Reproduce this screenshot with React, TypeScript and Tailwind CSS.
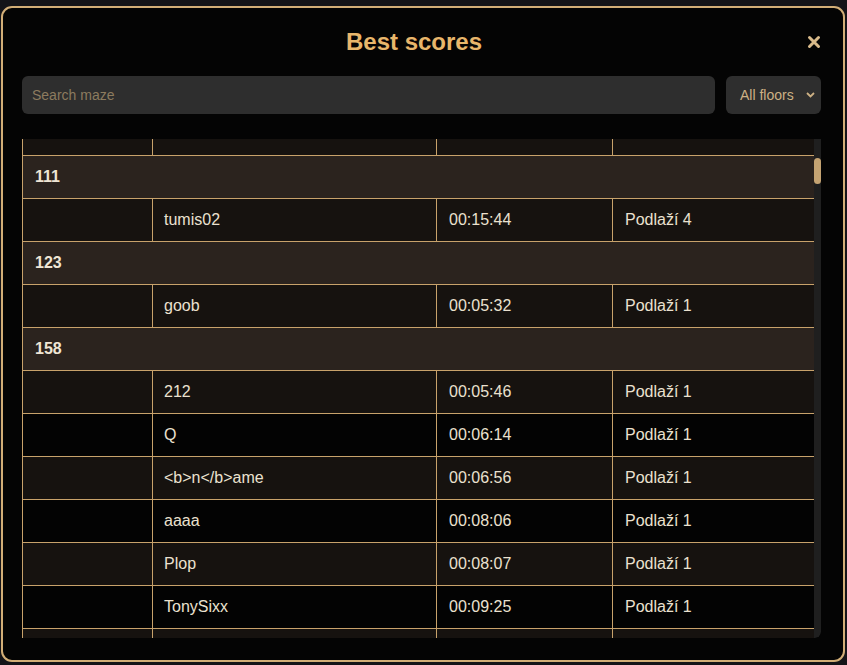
import { useState } from "react";

type Row =
  | { kind: "group"; label: string }
  | { kind: "score"; name: string; time: string; floor: string; shade: "brown" | "black" };

const rows: Row[] = [
  { kind: "score", name: "", time: "", floor: "", shade: "brown" },
  { kind: "group", label: "111" },
  { kind: "score", name: "tumis02", time: "00:15:44", floor: "Podlaží 4", shade: "brown" },
  { kind: "group", label: "123" },
  { kind: "score", name: "goob", time: "00:05:32", floor: "Podlaží 1", shade: "brown" },
  { kind: "group", label: "158" },
  { kind: "score", name: "212", time: "00:05:46", floor: "Podlaží 1", shade: "brown" },
  { kind: "score", name: "Q", time: "00:06:14", floor: "Podlaží 1", shade: "black" },
  { kind: "score", name: "<b>n</b>ame", time: "00:06:56", floor: "Podlaží 1", shade: "brown" },
  { kind: "score", name: "aaaa", time: "00:08:06", floor: "Podlaží 1", shade: "black" },
  { kind: "score", name: "Plop", time: "00:08:07", floor: "Podlaží 1", shade: "brown" },
  { kind: "score", name: "TonySixx", time: "00:09:25", floor: "Podlaží 1", shade: "black" },
  { kind: "score", name: "", time: "", floor: "", shade: "brown" },
];

function CloseIcon() {
  return (
    <svg width="14" height="14" viewBox="0 0 14 14" className="text-[#d9bb8b]">
      <path d="M2.5 2.5 L11.5 11.5 M11.5 2.5 L2.5 11.5" stroke="currentColor" strokeWidth="3" strokeLinecap="round" />
    </svg>
  );
}

function Chevron() {
  return (
    <svg width="9" height="6" viewBox="0 0 9 6" className="text-[#cdb184]">
      <path d="M1 1 L4.5 4.5 L8 1" fill="none" stroke="currentColor" strokeWidth="1.8" />
    </svg>
  );
}

export default function App() {
  const [query, setQuery] = useState("");

  return (
    <div
      className="h-[665px] w-[847px] overflow-hidden bg-[#141418] pl-px pt-[6px]"
      style={{ fontFamily: '"Liberation Sans", Arial, sans-serif' }}
    >
      <div className="flex h-[656px] w-[844px] flex-col rounded-[11px] border-2 border-[#d2ae77] bg-[#040404] pl-[19px] pr-[22px] pt-[18px]">
        <div className="flex h-8 items-center">
          <h1 className="flex-1 text-center text-2xl font-bold leading-8 text-[#e8b66b]">
            Best scores
          </h1>
          <button className="flex h-4 w-[15px] items-center justify-center">
            <CloseIcon />
          </button>
        </div>

        <div className="mt-[18px] flex h-[38px] gap-[11px]">
          <input
            value={query}
            onChange={(e) => setQuery(e.target.value)}
            placeholder="Search maze"
            className="h-full flex-1 rounded-md bg-[#2e2e2e] px-[10px] text-sm text-[#cdb184] outline-none placeholder:text-[#8c7b5f]"
          />
          <div className="flex h-full w-[95px] items-center justify-between rounded-md bg-[#2e2e2e] pl-[14px] pr-[6px] text-sm text-[#cdb184]">
            <span>All floors</span>
            <Chevron />
          </div>
        </div>

        <div className="mt-[25px] flex h-[499px] overflow-hidden rounded-br-md">
          <div className="h-full w-[793px] overflow-hidden">
            <div className="-mt-[26px]">
              {rows.map((row, i) =>
                row.kind === "group" ? (
                  <div
                    key={i}
                    className="flex h-[43px] items-center border-b border-l border-[#c8a26b] bg-[#2b231e] pl-[12px] text-base font-bold text-[#efe5d4]"
                  >
                    {row.label}
                  </div>
                ) : (
                  <div
                    key={i}
                    className={`grid h-[43px] grid-cols-[130px_284px_176px_203px] border-b border-[#c8a26b] text-base text-[#ebe1cf] ${
                      row.shade === "brown" ? "bg-[#16120f]" : "bg-[#030303]"
                    }`}
                  >
                    <div className="border-l border-[#c8a26b]" />
                    <div className="flex items-center border-l border-[#c8a26b] pl-[11px]">{row.name}</div>
                    <div className="flex items-center border-l border-[#c8a26b] pl-[12px]">{row.time}</div>
                    <div className="flex items-center border-l border-[#c8a26b] pl-[12px]">{row.floor}</div>
                  </div>
                )
              )}
            </div>
          </div>
          <div className="h-full w-[7px] rounded-br-md bg-[#1f1f1f] pt-[19px]">
            <div className="h-[26px] w-full rounded-full bg-[#c4a372]" />
          </div>
        </div>
      </div>
    </div>
  );
}
